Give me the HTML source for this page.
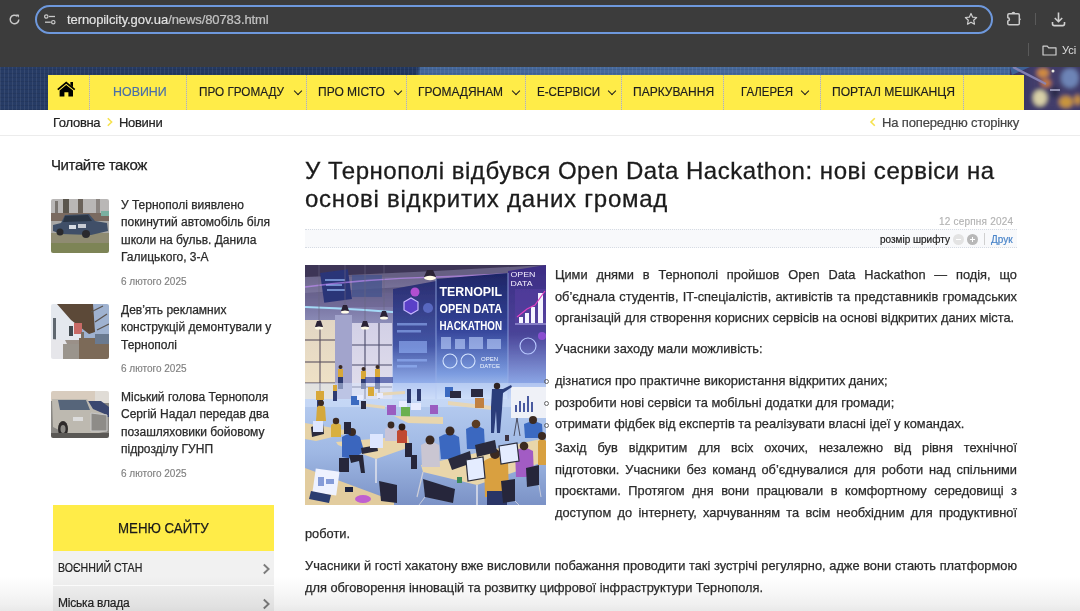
<!DOCTYPE html>
<html><head><meta charset="utf-8">
<style>
*{margin:0;padding:0;box-sizing:border-box}
html,body{width:1080px;height:611px;overflow:hidden;background:#fff;font-family:"Liberation Sans",sans-serif;position:relative}
.a{position:absolute;white-space:nowrap}
#chrome{position:absolute;left:0;top:0;width:1080px;height:67px;background:#3c3c3c}
#omni{position:absolute;left:35px;top:5px;width:958px;height:29px;border:2px solid #6e98dc;border-radius:15px}
#hdr{position:absolute;left:0;top:67px;width:1080px;height:43px;background:linear-gradient(100deg,#273c66 0,#22375f 300px,#203660 411px,#44679b 415px,#46699c 700px,#43669a 1000px)}
#hdr:after{content:"";position:absolute;inset:0;background:repeating-linear-gradient(90deg,rgba(255,255,255,.07) 0 1px,transparent 1px 4px),repeating-linear-gradient(0deg,rgba(0,0,0,.08) 0 1px,transparent 1px 4px)}
#city{position:absolute;left:1010px;top:67px;width:70px;height:43px;overflow:hidden}
#nav{position:absolute;left:48px;top:75px;width:976px;height:35px;background:#ffec48}
.sep{position:absolute;top:75px;height:35px;width:1px;background:repeating-linear-gradient(180deg,#bdb89a 0 1px,#d8d2a8 1px 2px)}
.nv{position:absolute;top:75px;height:34px;line-height:34px;font-size:13.5px;color:#1e1e1e;white-space:nowrap;transform-origin:0 50%;-webkit-text-stroke:0.2px #1e1e1e}
.chev{position:absolute;top:88px;width:6px;height:6px;border-right:1.8px solid #1e1e1e;border-bottom:1.8px solid #1e1e1e;transform:rotate(45deg)}
#crumb{position:absolute;left:0;top:110px;width:1080px;height:26px;background:#fff;border-bottom:1px solid #ececec}
.side{font-size:12px;color:#2a2a2a;line-height:17.3px;-webkit-text-stroke:0.25px #2a2a2a}
.date{font-size:10px;color:#808080;-webkit-text-stroke:0.15px #808080}
.th{position:absolute;left:51px;width:58px;border-radius:2px;overflow:hidden}
.body{font-size:12.8px;color:#2b2b2b;line-height:21.5px;-webkit-text-stroke:0.25px #2b2b2b}
.jl{display:block;text-align:justify;text-align-last:justify;white-space:nowrap}
</style></head><body>

<div id="chrome">
  <!-- reload -->
  <svg class="a" style="left:8px;top:13px" width="13" height="13" viewBox="0 0 13 13"><path d="M10.8 6.5A4.3 4.3 0 1 1 9.4 3.3" fill="none" stroke="#c9c9c9" stroke-width="1.5"/><path d="M8.2 1.2 L11.2 1.8 L10.6 4.8 Z" fill="#c9c9c9"/></svg>
  <div id="omni"></div>
  <!-- tune icon -->
  <svg class="a" style="left:44px;top:14px" width="12" height="11" viewBox="0 0 12 11"><circle cx="2.3" cy="2.5" r="1.7" fill="none" stroke="#c9c9c9" stroke-width="1.2"/><line x1="5" y1="2.5" x2="11" y2="2.5" stroke="#c9c9c9" stroke-width="1.3"/><circle cx="9.3" cy="8.2" r="1.7" fill="none" stroke="#c9c9c9" stroke-width="1.2"/><line x1="1" y1="8.2" x2="6.8" y2="8.2" stroke="#c9c9c9" stroke-width="1.3"/></svg>
  <div class="a" style="left:67px;top:11.5px;font-size:13px;line-height:16px;color:#e6e6e6;letter-spacing:-0.09px;-webkit-text-stroke:0.2px #d8d8d8">ternopilcity.gov.ua<span style="color:#bdbdbd">/news/80783.html</span></div>
  <!-- star -->
  <svg class="a" style="left:964px;top:12px" width="14" height="14" viewBox="0 0 24 24"><path d="M12 2.5l2.9 6.3 6.8.7-5.1 4.6 1.4 6.8L12 17.5l-6 3.4 1.4-6.8-5.1-4.6 6.8-.7z" fill="none" stroke="#d0d0d0" stroke-width="2" stroke-linejoin="round"/></svg>
  <!-- extension -->
  <svg class="a" style="left:1006px;top:10px" width="16" height="17" viewBox="0 0 16 17"><path d="M3 3.8 H12 Q13.3 3.8 13.3 5.1 V13.5 Q13.3 14.8 12 14.8 H3 Q1.8 14.8 1.8 13.5 V10.9 A1.6 1.6 0 0 0 1.8 7.7 V5.1 Q1.8 3.8 3 3.8 Z" fill="none" stroke="#cbcbcb" stroke-width="1.5" stroke-linejoin="round"/><path d="M5.5 3.6 A1.9 1.9 0 0 1 9.3 3.6 Z" fill="#cbcbcb"/><path d="M13.2 7.4 L15 9.2 L13.2 11 Z" fill="#cbcbcb"/></svg>
  <div class="a" style="left:1035px;top:13px;width:1px;height:12px;background:#5a5a5a"></div>
  <!-- download -->
  <svg class="a" style="left:1051px;top:11px" width="15" height="16" viewBox="0 0 15 16"><path d="M7.5 1.5v9M3.8 7l3.7 3.7L11.2 7" fill="none" stroke="#d0d0d0" stroke-width="1.6"/><path d="M1.5 11v1.8q0 1.8 1.8 1.8h8.4q1.8 0 1.8-1.8V11" fill="none" stroke="#d0d0d0" stroke-width="1.6"/></svg>
  <div class="a" style="left:1028px;top:43px;width:1px;height:13px;background:#5a5a5a"></div>
  <svg class="a" style="left:1042px;top:45px" width="15" height="11" viewBox="0 0 15 11"><path d="M1 1.2h4.3l1.4 1.6H14v7.2H1z" fill="none" stroke="#d0d0d0" stroke-width="1.2" stroke-linejoin="round"/></svg>
  <div class="a" style="left:1062px;top:43px;font-size:11px;line-height:14px;color:#e0e0e0">Усі</div>
</div>

<div id="hdr"></div>
<div id="city"><svg width="70" height="43" viewBox="1010 67 70 43"><defs><filter id="cb"><feGaussianBlur stdDeviation="2"/></filter></defs><rect x="1010" y="67" width="70" height="43" fill="#3b3866"/><polygon points="1010,67 1016,67 1060,96 1050,98" fill="#3e6196" opacity="0"/><g filter="url(#cb)"><rect x="1030" y="67" width="50" height="43" fill="#433c6a"/><ellipse cx="1043" cy="73" rx="6" ry="5" fill="#d08a40"/><ellipse cx="1046" cy="83" rx="5" ry="4" fill="#c87a3a"/><ellipse cx="1040" cy="98" rx="7" ry="8" fill="#d8d0a8"/><ellipse cx="1070" cy="78" rx="9" ry="10" fill="#6d84b6"/><ellipse cx="1066" cy="102" rx="7" ry="6" fill="#c8943c"/><ellipse cx="1078" cy="100" rx="4" ry="5" fill="#c89040"/><ellipse cx="1055" cy="92" rx="4" ry="6" fill="#2a2a48"/></g><polygon points="1010,67 1030,67 1012,75" fill="#3e6196"/><line x1="1013" y1="67" x2="1046" y2="84" stroke="#8a86b8" stroke-width="2.5" opacity="0.9"/><circle cx="1053" cy="71" r="1.5" fill="#e8e8e0"/><rect x="1050" y="89" width="10" height="2" fill="#b8b8d8" opacity="0.7"/></svg></div>
<div id="nav"></div>
<div class="sep" style="left:89px"></div>
<div class="sep" style="left:186px"></div>
<div class="sep" style="left:306px"></div>
<div class="sep" style="left:406px"></div>
<div class="sep" style="left:525px"></div>
<div class="sep" style="left:621px"></div>
<div class="sep" style="left:723px"></div>
<div class="sep" style="left:820px"></div>
<div class="sep" style="left:963px"></div>
<!-- home -->
<svg class="a" style="left:57px;top:81px" width="19" height="16" viewBox="0 0 19 16"><path d="M0.2 8 L9.2 0.6 L18.3 8 L17.2 9.3 L9.2 2.8 L1.3 9.3 Z" fill="#000"/><path d="M13.4 1 H16 V6.3 L13.4 4.1 Z" fill="#000"/><path d="M2.6 9.4 L9.2 4 L16 9.4 V15.4 H11.4 V11.2 H7.4 V15.4 H2.6 Z" fill="#000"/></svg>
<div class="nv" style="left:112.5px;color:#4a6fa8;-webkit-text-stroke:0.2px #4a6fa8;transform:scaleX(0.92)">НОВИНИ</div>
<div class="nv" style="left:198.5px;transform:scaleX(0.87)">ПРО ГРОМАДУ</div><div class="chev" style="left:295px"></div>
<div class="nv" style="left:318px;transform:scaleX(0.89)">ПРО МІСТО</div><div class="chev" style="left:395px"></div>
<div class="nv" style="left:418.3px;transform:scaleX(0.885)">ГРОМАДЯНАМ</div><div class="chev" style="left:513px"></div>
<div class="nv" style="left:537px;transform:scaleX(0.86)">Е-СЕРВІСИ</div><div class="chev" style="left:609px"></div>
<div class="nv" style="left:633px;transform:scaleX(0.89)">ПАРКУВАННЯ</div>
<div class="nv" style="left:740.5px;transform:scaleX(0.847)">ГАЛЕРЕЯ</div><div class="chev" style="left:802px"></div>
<div class="nv" style="left:832px;transform:scaleX(0.896)">ПОРТАЛ МЕШКАНЦЯ</div>

<div id="crumb"></div>
<div class="a" style="left:53px;top:114px;font-size:13px;line-height:18px;color:#222;letter-spacing:-0.3px;-webkit-text-stroke:0.2px #222">Головна</div>
<svg class="a" style="left:106px;top:117px" width="8" height="10" viewBox="0 0 8 10"><path d="M1.8 1.3 L5.6 5 L1.8 8.7" fill="none" stroke="#f6e24e" stroke-width="1.6"/></svg>
<div class="a" style="left:119px;top:114px;font-size:13px;line-height:18px;color:#222;letter-spacing:-0.3px;-webkit-text-stroke:0.2px #222">Новини</div>
<svg class="a" style="left:869px;top:117px" width="8" height="10" viewBox="0 0 8 10"><path d="M5.8 1.3 L2 5 L5.8 8.7" fill="none" stroke="#f6e24e" stroke-width="1.6"/></svg>
<div class="a" style="left:882px;top:114px;font-size:13px;line-height:18px;color:#444;letter-spacing:-0.15px;-webkit-text-stroke:0.2px #444">На попередню сторінку</div>

<!-- sidebar -->
<div class="a" style="left:51px;top:156px;font-size:15px;line-height:18px;color:#222;letter-spacing:-0.4px;-webkit-text-stroke:0.25px #222">Читайте також</div>

<div class="th" style="top:199px;height:54px"><svg width="58" height="54" viewBox="0 0 58 54"><defs><filter id="bl1"><feGaussianBlur stdDeviation="0.6"/></filter></defs><g filter="url(#bl1)"><rect width="58" height="54" fill="#aaa8a6"/><rect x="0" y="0" width="58" height="18" fill="#b9b7b6"/><rect x="12" y="0" width="6" height="18" fill="#5a544e"/><rect x="27" y="0" width="5" height="16" fill="#6a625a"/><rect x="4" y="2" width="3" height="14" fill="#7a7470"/><rect x="45" y="0" width="4" height="16" fill="#8a8480"/><rect x="0" y="14" width="58" height="8" fill="#7a6a60"/><rect x="50" y="12" width="8" height="5" fill="#7ab0a0"/><rect x="0" y="34" width="58" height="20" fill="#8f8b72"/><rect x="0" y="44" width="58" height="10" fill="#7d8456"/><path d="M2 26 L10 24 L14 16 L38 15 L44 22 L56 24 L57 32 L40 36 L10 35 L2 32 Z" fill="#3f5068"/><path d="M14 17 L37 16 L41 22 L12 23 Z" fill="#2a3444"/><rect x="18" y="26" width="7" height="4" fill="#d8dce4"/><rect x="27" y="25" width="8" height="4" fill="#c8ccd4"/><circle cx="9" cy="33" r="3.5" fill="#2a2a2e"/><circle cx="35" cy="35" r="4" fill="#2a2a2e"/></g></svg></div>
<div class="a side" style="left:121px;top:197px">У Тернополі виявлено<br>покинутий автомобіль біля<br>школи на бульв. Данила<br>Галицького, 3-А</div>
<div class="a date" style="left:121px;top:276px;line-height:12px">6 лютого 2025</div>

<div class="th" style="top:304px;height:55px"><svg width="58" height="55" viewBox="0 0 58 55"><defs><filter id="bl2"><feGaussianBlur stdDeviation="0.6"/></filter></defs><g filter="url(#bl2)"><rect width="58" height="55" fill="#9a9088"/><rect x="0" y="0" width="30" height="36" fill="#e4e8ee"/><rect x="30" y="0" width="28" height="34" fill="#9fb2d0"/><path d="M6 0 L42 0 L44 28 L38 30 L20 16 Z" fill="#5b4838"/><path d="M40 8 L52 2 M44 18 L56 10 M46 26 L58 20" stroke="#5a5450" stroke-width="1.2"/><rect x="23" y="19" width="8" height="11" fill="#c86a66"/><rect x="30" y="28" width="3" height="27" fill="#7a6e64"/><rect x="2" y="14" width="3" height="22" fill="#606870"/><rect x="18" y="22" width="4" height="10" fill="#404850"/><rect x="28" y="34" width="30" height="21" fill="#7c6a58"/><rect x="44" y="30" width="14" height="10" fill="#6a7a90"/><path d="M0 35 L14 36 L20 48 L16 55 L0 55 Z" fill="#e6e6ea"/><rect x="15" y="46" width="3" height="9" fill="#2a2a30"/><rect x="12" y="40" width="16" height="15" fill="#9a948c"/></g></svg></div>
<div class="a side" style="left:121px;top:302px">Дев’ять рекламних<br>конструкцій демонтували у<br>Тернополі</div>
<div class="a date" style="left:121px;top:363px;line-height:12px">6 лютого 2025</div>

<div class="th" style="top:391px;height:47px"><svg width="58" height="47" viewBox="0 0 58 47"><defs><filter id="bl3"><feGaussianBlur stdDeviation="0.6"/></filter></defs><g filter="url(#bl3)"><rect width="58" height="47" fill="#8a8884"/><rect x="0" y="0" width="58" height="10" fill="#d8ccbe"/><rect x="44" y="0" width="14" height="12" fill="#e0dcd6"/><path d="M32 10 L50 10 L58 16 L58 26 L36 26 Z" fill="#3a4670"/><path d="M1 8 L36 8 L42 18 L56 24 L56 40 L40 44 L18 44 L2 36 Z" fill="#bdb9b0"/><path d="M7 9 L35 9 L39 19 L9 19 Z" fill="#56657a"/><rect x="22" y="26" width="10" height="4" fill="#dcdcdc"/><path d="M40 22 L56 24 L56 40 L40 40 Z" fill="#8e8c88" stroke="#c8c8c8" stroke-width="1"/><ellipse cx="12" cy="38" rx="5" ry="8" fill="#2e2c2a"/><ellipse cx="12" cy="38" rx="2.5" ry="4" fill="#8a8884"/><rect x="0" y="42" width="58" height="5" fill="#5a5854"/></g></svg></div>
<div class="a side" style="left:121px;top:389px">Міський голова Тернополя<br>Сергій Надал передав два<br>позашляховики бойовому<br>підрозділу ГУНП</div>
<div class="a date" style="left:121px;top:468px;line-height:12px">6 лютого 2025</div>

<div class="a" style="left:53px;top:505px;width:221px;height:46px;background:#ffec48"></div><div class="a" style="left:118px;top:505px;font-size:15.5px;line-height:45px;color:#1a1a1a;transform:scaleX(0.855);transform-origin:0 50%;-webkit-text-stroke:0.25px #1a1a1a">МЕНЮ САЙТУ</div>
<div class="a" style="left:53px;top:551px;width:221px;height:34px;background:#f1f1f1"></div>
<div class="a" style="left:58px;top:560px;font-size:12px;line-height:16px;color:#222;transform:scaleX(0.884);transform-origin:0 50%;-webkit-text-stroke:0.2px #222">ВОЄННИЙ СТАН</div>
<svg class="a" style="left:262px;top:563px" width="9" height="12" viewBox="0 0 9 12"><path d="M1.8 1.5 L6.6 6 L1.8 10.5" fill="none" stroke="#7c7c7c" stroke-width="1.9"/></svg>
<div class="a" style="left:53px;top:586px;width:221px;height:34px;background:#f1f1f1"></div>
<div class="a" style="left:58px;top:595px;font-size:12px;line-height:16px;color:#222;letter-spacing:-0.2px;-webkit-text-stroke:0.2px #222">Міська влада</div>
<svg class="a" style="left:262px;top:598px" width="9" height="12" viewBox="0 0 9 12"><path d="M1.8 1.5 L6.6 6 L1.8 10.5" fill="none" stroke="#7c7c7c" stroke-width="1.9"/></svg>

<!-- article -->
<div class="a" style="left:305px;top:157px;font-size:24px;line-height:27.5px;color:#1b1b1b;-webkit-text-stroke:0.3px #1b1b1b"><span style="letter-spacing:0.53px">У Тернополі відбувся Open Data Hackathon: нові сервіси на</span><br><span style="letter-spacing:0.76px">основі відкритих даних громад</span></div>
<div class="a" style="left:939px;top:215px;font-size:10px;line-height:13px;color:#b3b3b3;letter-spacing:0.2px;-webkit-text-stroke:0.15px #b3b3b3">12 серпня 2024</div>
<div class="a" style="left:305px;top:229px;width:712px;height:19px;background:#f8f9fb;border-top:1px dotted #d6dbe3;border-bottom:1px dotted #d6dbe3"></div>
<div class="a" style="left:880px;top:233px;font-size:10px;line-height:13px;color:#222;-webkit-text-stroke:0.2px #222">розмір шрифту</div>
<div class="a" style="left:953px;top:234px;width:11px;height:11px;border-radius:50%;background:#e3e3e3"><div class="a" style="left:3px;top:5px;width:5px;height:1px;background:#fff"></div></div>
<div class="a" style="left:967px;top:234px;width:11px;height:11px;border-radius:50%;background:#b8b8b8"><div class="a" style="left:3px;top:5px;width:5px;height:1px;background:#fff"></div><div class="a" style="left:5px;top:3px;width:1px;height:5px;background:#fff"></div></div>
<div class="a" style="left:984px;top:233px;width:1px;height:12px;background:#d0d0d0"></div>
<div class="a" style="left:991px;top:233px;font-size:10px;line-height:13px;color:#4a85c9;-webkit-text-stroke:0.2px #4a85c9">Друк</div>

<div id="img" class="a" style="left:305px;top:265px;width:241px;height:240px;overflow:hidden"><svg width="241" height="240" viewBox="0 0 241 240"><defs><linearGradient id="bg" x1="0" y1="0" x2="0" y2="1"><stop offset="0" stop-color="#3a3252"/><stop offset="0.17" stop-color="#7a76a4"/><stop offset="0.4" stop-color="#b4c0e4"/><stop offset="0.55" stop-color="#c6d6f4"/><stop offset="0.72" stop-color="#a4bce8"/><stop offset="1" stop-color="#8098cc"/></linearGradient><linearGradient id="scr" x1="0" y1="0" x2="0" y2="1"><stop offset="0" stop-color="#1e2666"/><stop offset="0.45" stop-color="#34449a"/><stop offset="0.8" stop-color="#7c9ce0"/><stop offset="1" stop-color="#c4d8f8"/></linearGradient><linearGradient id="scr2" x1="0" y1="0" x2="0" y2="1"><stop offset="0" stop-color="#3c2c84"/><stop offset="0.5" stop-color="#4a4498"/><stop offset="0.85" stop-color="#8aa4e4"/><stop offset="1" stop-color="#c0d4f6"/></linearGradient><linearGradient id="scr3" x1="0" y1="0" x2="0" y2="1"><stop offset="0" stop-color="#2a2e72"/><stop offset="0.55" stop-color="#4456a6"/><stop offset="0.85" stop-color="#8eaae8"/><stop offset="1" stop-color="#c4d6f6"/></linearGradient><linearGradient id="win1" x1="0" y1="0" x2="0" y2="1"><stop offset="0" stop-color="#e2d6c4"/><stop offset="1" stop-color="#f4e6c6"/></linearGradient><linearGradient id="win2" x1="0" y1="0" x2="0" y2="1"><stop offset="0" stop-color="#d2d0e6"/><stop offset="1" stop-color="#e6e2ee"/></linearGradient><linearGradient id="floor" x1="0" y1="0" x2="0" y2="1"><stop offset="0" stop-color="#b6ccf0"/><stop offset="0.5" stop-color="#9fb8e4"/><stop offset="1" stop-color="#7b92c6"/></linearGradient><filter id="soft"><feGaussianBlur stdDeviation="0.45"/></filter></defs><g filter="url(#soft)"><rect width="241" height="240" fill="url(#bg)"/><!-- ceiling --><rect x="0" y="0" width="241" height="12" fill="#3e3656"/><polygon points="0,12 130,6 241,0 241,12 130,20 0,28" fill="#8e88b0" opacity="0.5"/><rect x="0" y="28" width="88" height="14" fill="#6a6490" opacity="0.6"/><rect x="17" y="6" width="28" height="30" fill="#2c3478" transform="rotate(-8 31 21)"/><g fill="#8fb2f0" opacity="0.7"><rect x="20" y="14" width="20" height="2"/><rect x="21" y="19" width="16" height="2"/><rect x="22" y="24" width="18" height="2"/></g><rect x="47" y="10" width="30" height="22" fill="#46548e" opacity="0.75"/><!-- neon lines --><path d="M0 42 Q60 44 120 50 T241 46" stroke="#a8e4ff" stroke-width="2" fill="none" opacity="0.9"/><path d="M0 22 Q60 14 130 12 T241 6" stroke="#c890ff" stroke-width="1.6" fill="none" opacity="0.6"/><!-- windows --><rect x="0" y="55" width="30" height="95" fill="url(#win1)"/><g stroke="#5a5060" stroke-width="1.1"><line x1="15" y1="55" x2="15" y2="150"/><line x1="0" y1="75" x2="30" y2="75"/><line x1="0" y1="97" x2="30" y2="97"/><line x1="0" y1="118" x2="30" y2="118"/></g><rect x="30" y="50" width="17" height="100" fill="#a2a4cc"/><rect x="47" y="58" width="40" height="90" fill="url(#win2)"/><g stroke="#4a4a6a" stroke-width="1.1"><line x1="60" y1="58" x2="60" y2="148"/><line x1="74" y1="58" x2="74" y2="148"/><line x1="47" y1="80" x2="87" y2="80"/><line x1="47" y1="100" x2="87" y2="100"/><line x1="47" y1="122" x2="87" y2="122"/></g><!-- lamps --><g stroke="#6a6480" stroke-width="0.6"><line x1="14" y1="0" x2="14" y2="56"/><line x1="40" y1="0" x2="40" y2="40"/><line x1="60" y1="0" x2="60" y2="56"/><line x1="79" y1="0" x2="79" y2="46"/></g><g fill="#2a2436"><polygon points="10,62 18,62 16,56 12,56"/><polygon points="36,46 44,46 42,40 38,40"/><polygon points="56,62 64,62 62,56 58,56"/><polygon points="75,52 83,52 81,46 77,46"/><polygon points="119,12 131,12 128,5 122,5"/></g><g fill="#fffbe8"><ellipse cx="14" cy="63" rx="4" ry="1.6"/><ellipse cx="40" cy="47" rx="4" ry="1.6"/><ellipse cx="60" cy="63" rx="4" ry="1.6"/><ellipse cx="79" cy="53" rx="4" ry="1.6"/><ellipse cx="125" cy="13" rx="6" ry="2.2"/></g><g fill="#d8a838"><rect x="33" y="104" width="5" height="8"/><rect x="56" y="106" width="5" height="8"/><rect x="70" y="104" width="5" height="8"/></g><g fill="#2e3a70"><rect x="33" y="112" width="5" height="12"/><rect x="56" y="114" width="5" height="10"/><rect x="70" y="112" width="5" height="12"/></g><g fill="#3a2a22"><circle cx="35.5" cy="102" r="2"/><circle cx="58.5" cy="104" r="2"/><circle cx="72.5" cy="102" r="2"/></g><rect x="60" y="112" width="28" height="6" fill="#3848a0" opacity="0.7"/><!-- screens --><polygon points="88,24 131,16 131,134 88,134" fill="url(#scr3)"/><polygon points="131,14 203,8 203,134 131,134" fill="url(#scr)"/><polygon points="203,6 241,0 241,138 203,134" fill="url(#scr2)"/><line x1="131" y1="14" x2="131" y2="134" stroke="#9ab0e8" stroke-width="0.8"/><line x1="203" y1="8" x2="203" y2="134" stroke="#9ab0e8" stroke-width="0.8"/><!-- icons on left screen --><polygon points="99,37 106,33 113,37 113,45 106,49 99,45" fill="#5a3fc8" stroke="#c8b8ff" stroke-width="1.2"/><circle cx="110" cy="27" r="4.5" fill="#b050d0"/><circle cx="123" cy="43" r="5" fill="#6a7ad8" opacity="0.7"/><g fill="#9cbcff" opacity="0.55"><rect x="92" y="58" width="30" height="2.5"/><rect x="92" y="65" width="24" height="2.5"/><rect x="94" y="76" width="28" height="12"/><rect x="92" y="94" width="30" height="2.5"/><rect x="92" y="100" width="20" height="2.5"/></g><!-- title text --><g fill="#fff" font-family="Liberation Sans" font-weight="bold"><text x="134.5" y="31" font-size="13.5" textLength="62.5" lengthAdjust="spacingAndGlyphs">TERNOPIL</text><text x="134.5" y="47.5" font-size="13.5" textLength="62.5" lengthAdjust="spacingAndGlyphs">OPEN DATA</text><text x="134.5" y="65" font-size="13.5" textLength="62.5" lengthAdjust="spacingAndGlyphs">HACKATHON</text></g><g fill="#f4f0ff" font-family="Liberation Sans"><text x="205.5" y="11.5" font-size="7.5" textLength="25" lengthAdjust="spacingAndGlyphs">OPEN</text><text x="205.5" y="20.5" font-size="7.5" textLength="22" lengthAdjust="spacingAndGlyphs">DATA</text></g><g fill="#c0d4ff" opacity="0.6"><rect x="136" y="72" width="10" height="12"/><rect x="150" y="74" width="10" height="10"/><rect x="164" y="72" width="14" height="12"/><rect x="182" y="74" width="14" height="10"/></g><circle cx="145" cy="96" r="7" fill="none" stroke="#d4e4ff" stroke-width="1.1"/><circle cx="163" cy="96" r="7" fill="none" stroke="#d4e4ff" stroke-width="1.1"/><text x="176" y="96" font-size="6" fill="#f0f6ff" font-family="Liberation Sans">OPEN</text><text x="175" y="103" font-size="6" fill="#f0f6ff" font-family="Liberation Sans">DATCE</text><!-- chart on right screen --><rect x="210" y="24" width="31" height="36" fill="#6040a8" opacity="0.45"/><g fill="#f4f4ff"><rect x="214" y="52" width="4" height="6"/><rect x="220" y="48" width="4" height="10"/><rect x="226" y="42" width="4" height="16"/><rect x="233" y="28" width="5" height="30"/></g><polyline points="212,52 222,44 230,40 240,26" fill="none" stroke="#e040c0" stroke-width="1.2"/><line x1="210" y1="59" x2="241" y2="59" stroke="#d0d8ff" stroke-width="0.8"/><circle cx="223" cy="81" r="8" fill="none" stroke="#b8c8ff" stroke-width="1.1"/><circle cx="237" cy="71" r="4" fill="#8a50d0"/><!-- floor --><rect x="0" y="134" width="241" height="106" fill="url(#floor)"/><rect x="0" y="118" width="241" height="24" fill="#d6e4fb" opacity="0.5"/><!-- back row people & tables --><g fill="#e6d6b6"><polygon points="56,138 80,141 80,144 56,141"/><polygon points="143,136 187,141 187,145 143,140"/><polygon points="70,128 100,126 100,129 70,131"/></g><g fill="#2e3a70"><rect x="12" y="128" width="6" height="26"/><rect x="28" y="120" width="4" height="16"/><rect x="102" y="124" width="4" height="14"/><rect x="112" y="124" width="4" height="12"/></g><g fill="#d8a838"><rect x="11" y="126" width="8" height="9"/><rect x="28" y="120" width="4" height="6"/><rect x="63" y="122" width="6" height="9"/></g><g fill="#3a6ac0"><rect x="46" y="131" width="8" height="9"/><rect x="140" y="122" width="8" height="10"/></g><g fill="#c08040"><rect x="170" y="133" width="9" height="10"/></g><g fill="#2a2c40"><rect x="145" y="126" width="11" height="7"/><rect x="166" y="124" width="12" height="8"/><rect x="56" y="136" width="5" height="8"/></g><g fill="#9a5cc0"><rect x="82" y="140" width="9" height="10"/><rect x="125" y="140" width="8" height="9"/></g><g fill="#6ab050"><rect x="96" y="142" width="9" height="12"/></g><g fill="#e8ecff"><rect x="94" y="136" width="8" height="6"/><rect x="106" y="138" width="10" height="7"/><rect x="72" y="128" width="6" height="5"/><rect x="52" y="130" width="6" height="5"/></g><!-- whiteboard --><rect x="206" y="122" width="35" height="31" fill="#eff1f7"/><g fill="#4a5aa0"><rect x="210" y="140" width="2" height="7"/><rect x="214" y="136" width="2" height="11"/><rect x="218" y="138" width="2" height="9"/><rect x="222" y="131" width="2" height="16"/><rect x="226" y="137" width="2" height="10"/></g><line x1="212" y1="153" x2="209" y2="171" stroke="#404050" stroke-width="0.9"/><line x1="212" y1="153" x2="215" y2="171" stroke="#404050" stroke-width="0.9"/><!-- presenter --><path d="M187 124 h11 l8 -4 l1 2 l-9 6 l-1 16 l-2 24 h-3 l-1 -22 l-2 22 h-3 l0 -26 z" fill="#2b3c7a"/><circle cx="192" cy="121" r="3.2" fill="#2e2420"/><!-- mid tables --><polygon points="0,158 40,165 40,169 11,176 0,174" fill="#e6d2a6"/><polygon points="31,177 103,171 105,182 71,194 33,180" fill="#e8d5aa"/><polygon points="89,151 138,152 138,159 103,158" fill="#e8d6ae"/><!-- left-middle people --><path d="M12 142 q4 -4 8 0 l1 14 h-10 z" fill="#d4a83c"/><circle cx="16" cy="138" r="3" fill="#3a2a22"/><path d="M26 160 q5 -5 10 0 v12 h-10z" fill="#d8b040"/><circle cx="31" cy="156" r="3.2" fill="#3a2a22"/><path d="M37 172 q9 -7 18 0 l4 14 l-10 8 l-12 -2 z" fill="#3a66be"/><circle cx="47" cy="167" r="4" fill="#3a2a22"/><path d="M44 190 l14 0 l2 18 h-4 l-2 -12 l-8 2z" fill="#252838"/><path d="M80 164 q6 -5 12 0 v12 h-12z" fill="#c8c4d8"/><circle cx="86" cy="160" r="3.4" fill="#3a2a22"/><path d="M92 166 q5 -4 10 0 v12 h-10z" fill="#c04a30"/><circle cx="97" cy="162" r="3.4" fill="#2a1a16"/><!-- laptops mid --><g fill="#2a2c3c"><polygon points="6,162 18,158 19,169 7,172"/><polygon points="56,183 72,180 73,186 57,189"/></g><g fill="#dde6ff"><polygon points="8,156 18,156 18,167 8,167"/><polygon points="65,169 78,169 78,183 65,183"/></g><!-- chairs mid --><g fill="#26283a"><rect x="34" y="193" width="10" height="14"/><rect x="100" y="178" width="7" height="14"/><rect x="39" y="157" width="7" height="12"/></g><!-- bottom-left table --><polygon points="0,203 89,236 89,241 0,241" fill="#e2cc9e"/><rect x="9" y="205" width="24" height="24" fill="#eef2ff" transform="rotate(8 21 217)"/><g fill="#5a78c8" opacity="0.7"><rect x="13" y="212" width="6" height="9"/><rect x="21" y="214" width="8" height="5"/></g><polygon points="6,226 26,230 24,238 4,234" fill="#2c3c70"/><ellipse cx="58" cy="234" rx="8" ry="4" fill="#c060d0"/><rect x="40" y="222" width="8" height="5" fill="#1e2440"/><!-- big right table --><polygon points="116,200 236,174 241,176 241,196 172,220 118,207" fill="#e9d6aa"/><line x1="172" y1="220" x2="172" y2="240" stroke="#e8e8ee" stroke-width="1.4"/><line x1="118" y1="207" x2="112" y2="232" stroke="#d0d0d8" stroke-width="1.2"/><line x1="71" y1="194" x2="71" y2="218" stroke="#e8e8ee" stroke-width="1.4"/><!-- right people --><path d="M116 180 q9 -6 18 0 l1 22 h-18z" fill="#cac6d2"/><circle cx="125" cy="175" r="4.5" fill="#3a2a22"/><path d="M134 172 q10 -7 20 0 l2 22 h-20z" fill="#3a68c0"/><circle cx="145" cy="166" r="4.5" fill="#3a2a22"/><path d="M161 164 q9 -6 18 0 l1 20 h-18z" fill="#3a68c0"/><circle cx="171" cy="159" r="4.3" fill="#5a3a22"/><path d="M219 159 q9 -5 18 0 l1 14 h-18z" fill="#3a6ac2"/><circle cx="228" cy="155" r="4" fill="#3a2a22"/><path d="M210 186 q9 -6 18 0 l1 26 h-18z" fill="#a25cc4"/><circle cx="219" cy="181" r="4.3" fill="#3a2a22"/><path d="M233 176 q5 -4 8 0 v24 h-8z" fill="#d8a040"/><circle cx="237" cy="171" r="4" fill="#3a2a22"/><path d="M179 196 q12 -8 24 0 l1 36 h-24z" fill="#d9a040"/><circle cx="190" cy="189" r="5" fill="#3a2a22"/><rect x="182" y="226" width="20" height="14" fill="#2a3666"/><!-- laptops right --><g fill="#2a2c3c"><polygon points="143,194 165,186 167,198 147,205"/><polygon points="170,180 190,175 192,187 172,192"/></g><g fill="#e4ecff" stroke="#2a2c3c" stroke-width="1.2"><polygon points="194,181 212,178 214,196 196,199"/><polygon points="161,195 178,192 180,213 163,216"/></g><rect x="152" y="212" width="5" height="6" fill="#3a8a5a"/><rect x="200" y="170" width="4" height="6" fill="#3a3040"/><!-- chairs right --><g fill="#26283a"><polygon points="74,216 92,220 92,238 76,236"/><polygon points="118,214 150,224 148,238 120,232"/><polygon points="196,216 210,214 210,236 198,238"/><polygon points="221,203 234,200 234,220 222,222"/><rect x="106" y="190" width="6" height="14"/></g><g stroke="#d8d8e0" stroke-width="0.8"><line x1="120" y1="232" x2="114" y2="240"/><line x1="210" y1="236" x2="214" y2="240"/><line x1="234" y1="220" x2="236" y2="232"/></g></g></svg></div>

<div class="a body" style="left:555px;top:264px;width:462px">
  <span class="jl">Цими днями в Тернополі пройшов Open Data Hackathon — подія, що</span>
  <span class="jl">об’єднала студентів, IT-спеціалістів, активістів та представників громадських</span>
  <span class="jl" style="text-align-last:left">організацій для створення корисних сервісів на основі відкритих даних міста.</span>
</div>
<div class="a body" style="left:555px;top:338px">Учасники заходу мали можливість:</div>
<div class="a body" style="left:555px;top:370px">дізнатися про практичне використання відкритих даних;<br>розробити нові сервіси та мобільні додатки для громади;<br>отримати фідбек від експертів та реалізувати власні ідеї у командах.</div>
<div class="a" style="left:544px;top:379px;width:5px;height:5px;border:1px solid #666;border-radius:50%"></div>
<div class="a" style="left:544px;top:401px;width:5px;height:5px;border:1px solid #666;border-radius:50%"></div>
<div class="a" style="left:544px;top:423px;width:5px;height:5px;border:1px solid #666;border-radius:50%"></div>
<div class="a body" style="left:555px;top:437px;width:462px">
  <span class="jl">Захід був відкритим для всіх охочих, незалежно від рівня технічної</span>
  <span class="jl">підготовки. Учасники без команд об’єднувалися для роботи над спільними</span>
  <span class="jl">проєктами. Протягом дня вони працювали в комфортному середовищі з</span>
  <span class="jl">доступом до інтернету, харчуванням та всім необхідним для продуктивної</span>
</div>
<div class="a body" style="left:305px;top:523px">роботи.</div>
<div class="a body" style="left:305px;top:555px;width:712px">
  <span class="jl">Учасники й гості хакатону вже висловили побажання проводити такі зустрічі регулярно, адже вони стають платформою</span>
  <span class="jl" style="text-align-last:left">для обговорення інновацій та розвитку цифрової інфраструктури Тернополя.</span>
</div>

<div class="a" style="left:0;top:577px;width:1080px;height:34px;background:linear-gradient(180deg,#fff 0,#f8f8f8 40%,#f0f0f0 80%,#e9e9e9 100%);mix-blend-mode:multiply;pointer-events:none"></div>
</body></html>
